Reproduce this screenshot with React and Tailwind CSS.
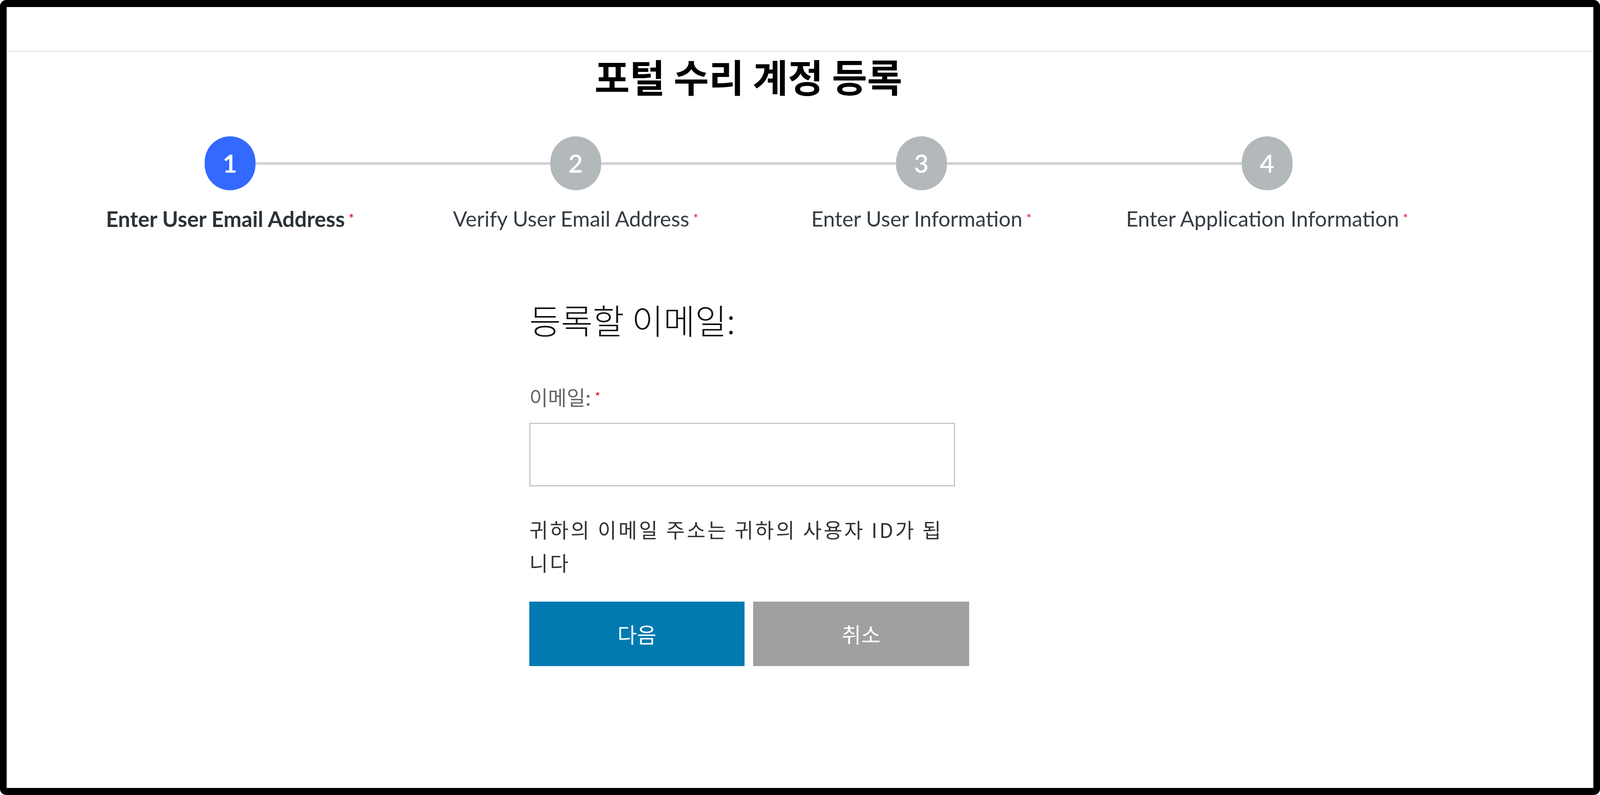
import React from 'react';

const steps = [
  { n: 1, label: 'Enter User Email Address', active: true },
  { n: 2, label: 'Verify User Email Address', active: false },
  { n: 3, label: 'Enter User Information', active: false },
  { n: 4, label: 'Enter Application Information', active: false },
];

const Star = () => (
  <span className="ml-[10px] align-top text-[30px] leading-none text-[#e8112d] relative top-[14px]">*</span>
);

const App = () => {
  return (
    <div className="w-screen h-screen bg-white" style={{ fontFamily: '"Noto Sans CJK KR", "Noto Sans", sans-serif' }}>
      <div className="h-full box-border border-x-[17px] border-y-[18px] border-black rounded-[16px] overflow-hidden flex flex-col">
        {/* top bar */}
        <div className="h-[115px] shrink-0 border-b-[3px] border-[#e8e8e8]"></div>

        <div className="ml-[129px] w-[3540px] flex flex-col">
          <h1 className="text-center text-[98px] leading-[120px] font-bold text-black">포털 수리 계정 등록</h1>

          {/* Stepper */}
          <div className="mt-[96px] grid grid-cols-4">
            {steps.map((s, i) => (
              <div key={s.n} className="flex flex-col items-center">
                <div className="flex items-center w-full">
                  <div className={i === 0 ? 'flex-1 h-[7px]' : 'flex-1 h-[7px] bg-[#d3d3d3]'}></div>
                  <div
                    className={
                      s.active
                        ? 'w-[130px] h-[138px] rounded-full bg-[#3369ff] flex items-center justify-center text-white text-[64px] font-bold'
                        : 'w-[130px] h-[138px] rounded-full bg-[#b3b8bb] flex items-center justify-center text-white text-[64px] font-semibold'
                    }
                    style={{ fontFamily: 'Lato, sans-serif' }}
                  >
                    {s.n}
                  </div>
                  <div className={i === 3 ? 'flex-1 h-[7px]' : 'flex-1 h-[7px] bg-[#d3d3d3]'}></div>
                </div>
                <div
                  className={
                    s.active
                      ? 'mt-[42px] text-[55px] leading-[62px] font-bold text-[#2b3339] whitespace-nowrap'
                      : 'mt-[42px] text-[54px] leading-[62px] text-[#353c44] whitespace-nowrap'
                  }
                  style={{ fontFamily: 'Lato, sans-serif' }}
                >
                  {s.label}
                  <Star />
                </div>
              </div>
            ))}
          </div>

          {/* Form */}
          <div className="ml-[1209px] mt-[172px] w-[1140px] flex flex-col">
            <h2 className="text-[88px] leading-[108px] font-light text-[#111]">등록할 이메일:</h2>
            <label className="mt-[114px] text-[52px] leading-[62px] text-[#666]">
              이메일:
              <Star />
            </label>
            <input
              type="email"
              className="mt-[35px] w-[1090px] h-[163px] border-[3px] border-[#c6c6c6] bg-white outline-none"
            />
            <p className="mt-[67px] w-[1100px] text-[52px] leading-[85px] tracking-[5px] text-[#333]">
              귀하의 이메일 주소는 귀하의 사용자 ID가 됩니다
            </p>
            <div className="mt-[58px] flex gap-[22px]">
              <button className="w-[551px] h-[165px] bg-[#007ab0] text-white text-[54px]">다음</button>
              <button className="w-[553px] h-[165px] bg-[#a0a0a0] text-white text-[54px]">취소</button>
            </div>
          </div>
        </div>
      </div>
    </div>
  );
};

export default App;
